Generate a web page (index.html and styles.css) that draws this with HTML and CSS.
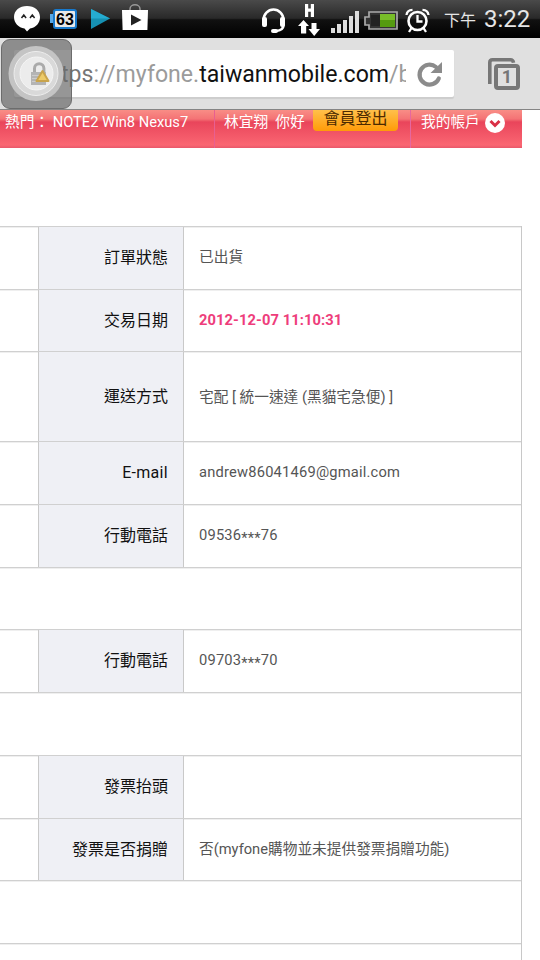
FILE: index.html
```
<!DOCTYPE html>
<html lang="zh-Hant">

<head>
    <meta charset="UTF-8">
    <title>myfone</title>
    <link rel="stylesheet" href="styles.css">
</head>

<body>
    <div id="wrap">
        <div class="status">
            <svg class="chat" width="28" height="28" viewBox="0 0 28 28">
                <path d="M14 1C6.500 1 1 5.500 1 12c0 6 4.500 10.500 10.500 11.500l2.500 3 3-3C23 22.500 27 18 27 12 27 5.500 21.500 1 14 1z" fill="#fff" />
                <path d="M8.500 13l2.300-3 2.300 3M17 13l2.300-3 2.300 3" fill="none" stroke="#222" stroke-width="1.500" />
            </svg>
            <div class="nub"></div>
            <div class="level">63</div>
            <svg class="play" width="19" height="20" viewBox="0 0 19 20">
                <path d="M0 0l19 9.500L0 20z" fill="#1690b2" />
                <path d="M0 0l19 9.500H0z" fill="#25acd1" />
            </svg>
            <svg class="bag" width="26" height="26" viewBox="0 0 26 26">
                <path d="M8 7V5a5 4.200 0 0 1 10 0v2" fill="none" stroke="#999" stroke-width="1.500" />
                <path d="M0 6h26l-.6 20H.6z" fill="#fff" />
                <path d="M9 10.500l10.500 5.500L9 21.500z" fill="#222" />
            </svg>
            <svg class="headset" width="25" height="26" viewBox="0 0 25 26">
                <path d="M2.500 15v-3a10 10.500 0 0 1 20 0v5q0 5-7 6" fill="none" stroke="#fff" stroke-width="2.500" />
                <rect x="1" y="9" width="5" height="10" rx="2" fill="#fff" />
                <rect x="19" y="9" width="5" height="10" rx="2" fill="#fff" />
                <rect x="10" y="21" width="7" height="4" rx="2" fill="#fff" />
            </svg>
            <svg class="data" width="22" height="33" viewBox="0 0 22 33">
                <path d="M7 0h3.200v4.500h2.600V0H16v13h-3.200V7.800h-2.600V13H7zM5.500 16L11 22H8.200v7.500H3V22H0zM13.500 19h5v6H22l-5.800 7L10.500 25h3z" fill="#fff" />
            </svg>
            <svg class="signal" width="29" height="22" viewBox="0 0 29 22">
                <path d="M0 17h4v5H0zM6 13h4v9H6zM12 9h4v13h-4zM18 5h4v17h-4zM24 0h4v22h-4z" fill="#ddd" />
            </svg>
            <svg class="battery" width="35" height="20" viewBox="0 0 35 20">
                <path d="M5 1h28v17H5v-4H1V6h4z" fill="#333" stroke="#aaa" stroke-width="1.700" />
                <path d="M7 4h9v11H7z" fill="#222" />
                <path d="M16 3h15v13H16z" fill="#559b10" />
                <path d="M16 3h15v6H16z" fill="#78bd28" />
            </svg>
            <svg class="alarm" width="25" height="25" viewBox="0 0 25 25">
                <circle cx="12.500" cy="13" r="9" fill="none" stroke="#fff" stroke-width="2.600" />
                <path d="M12.500 7v6.500h5M1.500 7Q2 2 7.500 1.800M23.500 7Q23 2 17.500 1.800M6.500 20L4 24M18.500 20l2.500 4" fill="none" stroke="#fff" stroke-width="2.300" />
            </svg>
            <span class="noon">下午</span>
            <span class="time">3:22</span>
        </div>
        <div class="toolbar">
            <div class="url">
                <div class="address"><span class="scheme">tps</span>://myfone.<b>taiwanmobile.com</b>/b</div>
                <svg width="27" height="27" viewBox="0 0 27 27">
                    <path d="M20 6A10 10 0 1 0 22.800 17.500" fill="none" stroke="#8b8b8b" stroke-width="4.200" stroke-linecap="round" />
                    <path d="M26 1v11H14.500z" fill="#8b8b8b" />
                </svg>
            </div>
            <div class="tabs">
                <svg width="32" height="32" viewBox="0 0 32 32">
                    <path d="M1.800 26V4.500Q1.800 1.800 4.500 1.800h18q2.500 0 3 3" fill="none" stroke="#777" stroke-width="3.600" />
                    <rect x="6" y="6" width="26" height="26" fill="#e0e0e0" />
                    <rect x="8" y="8" width="22" height="22" rx="2" fill="#e0e0e0" stroke="#777" stroke-width="4" />
                </svg>
                <span>1</span>
            </div>
            <!-- 悬浮按钮 -->
            <div class="touch">
                <svg width="70" height="70" viewBox="0 0 70 70">
                    <circle cx="35" cy="34.500" r="27.500" fill="#c4c4c4" />
                    <circle cx="35" cy="34.500" r="22" fill="#d9d9d9" stroke="#eee" />
                    <circle cx="35.500" cy="34.500" r="16.500" fill="#ececec" stroke="#f5f5f5" />
                    <path d="M33.500 34v-4.500a4.700 4.800 0 0 1 9.400 0V34" fill="none" stroke="#aaa" stroke-width="3" />
                    <rect x="30" y="33" width="15" height="13" fill="#b4b4b4" />
                    <path d="M31 36.500h13M31 39.500h13M31 42.500h13" stroke="#ccc" />
                    <path d="M41.500 32L47.500 42h-12z" fill="#edcb68" stroke="#c9a44c" stroke-width="2" stroke-linejoin="round" />
                </svg>
            </div>
        </div>
        <div class="nav">
            <div class="hot">熱門： NOTE2 Win8 Nexus7</div>
            <div class="hello">林宜翔&nbsp; 你好</div>
            <a class="logout">會員登出</a>
            <div class="account">我的帳戶
                <svg width="20" height="20" viewBox="0 0 20 20">
                    <circle cx="10" cy="10" r="10" fill="#fff" />
                    <path d="M5.500 8l4.500 4.500L14.500 8" fill="none" stroke="#d93046" stroke-width="3" />
                </svg>
            </div>
        </div>
        <ul class="order">
            <li><i></i><label>訂單狀態</label><p>已出貨</p></li>
            <li class="short"><i></i><label>交易日期</label><p class="date">2012-12-07 11:10:31</p></li>
            <li class="tall"><i></i><label>運送方式</label><p>宅配 [ 統一速達 (黑貓宅急便) ]</p></li>
            <li><i></i><label class="latin">E-mail</label><p class="mail">andrew86041469@gmail.com</p></li>
            <li><i></i><label>行動電話</label><p class="phone">09536<span>***</span>76</p></li>
            <li class="short"></li>
            <li><i></i><label>行動電話</label><p class="phone">09703<span>***</span>70</p></li>
            <li></li>
            <li><i></i><label>發票抬頭</label><p></p></li>
            <li class="short"><i></i><label>發票是否捐贈</label><p>否(myfone購物並未提供發票捐贈功能)</p></li>
            <li></li>
            <li></li>
        </ul>
    </div>
</body>

</html>
```
FILE: styles.css
```
body {
    margin: 0;
    background: #fff;
    font-family: Roboto, "Noto Sans CJK TC", sans-serif;
}

ul,
p {
    padding: 0;
    margin: 0;
    list-style: none;
}

svg {
    display: block;
    flex: none;
}

#wrap {
    width: 540px;
    height: 960px;
    overflow: hidden;
}

.status {
    display: flex;
    align-items: flex-start;
    box-sizing: border-box;
    height: 38px;
    padding-left: 13px;
    background: linear-gradient(#4a4a4a, #292929 48%, #111 52%, #000);
    color: #e6e6e6;
    white-space: nowrap;
}

.chat {
    margin-top: 5px;
}

.nub {
    width: 3px;
    height: 9px;
    margin: 14px 0 0 9px;
    background: #5aa9e6;
}

.level {
    box-sizing: border-box;
    width: 24px;
    height: 20px;
    margin-top: 9px;
    border: 2px solid #1779cd;
    border-radius: 3px;
    background: #e8e8e8;
    color: #000;
    font: bold 16px/17px "Liberation Sans", sans-serif;
    text-align: center;
}

.play {
    margin: 9px 0 0 14px;
}

.bag {
    margin: 4px 0 0 12px;
}

.headset {
    margin: 8px 0 0 113px;
}

.data {
    margin: 4px 0 0 12px;
}

.signal {
    margin: 11px 0 0 11px;
}

.battery {
    margin: 11px 0 0 4px;
}

.alarm {
    margin: 8px 0 0 6px;
}

.noon {
    width: 40px;
    margin-left: 14px;
    font-size: 16px;
    line-height: 42px;
}

.time {
    font-size: 24px;
    line-height: 38px;
}

.toolbar {
    position: relative;
    display: flex;
    box-sizing: border-box;
    height: 72px;
    padding: 12px 0 0 14px;
    border-bottom: 1px solid #858585;
    background: #e0e0e0;
}

.url {
    display: flex;
    box-sizing: border-box;
    width: 440px;
    height: 47px;
    padding: 11px 11px 0 47px;
    border-radius: 2px;
    background: #fff;
    box-shadow: 0 2px 1px #cdcdcd;
}

.address {
    width: 345px;
    height: 36px;
    margin: -4px 10px 0 0;
    overflow: hidden;
    color: #9b9b9b;
    font-size: 23.1px;
    line-height: 36px;
    white-space: nowrap;
}

.address b {
    color: #111;
    font-weight: normal;
}

.scheme {
    color: #777;
}

.tabs {
    position: relative;
    margin: 8px 0 0 34px;
}

.tabs span {
    position: absolute;
    top: 7px;
    left: 7px;
    width: 24px;
    color: #777;
    font: bold 18px/24px Roboto, sans-serif;
    text-align: center;
}

.touch {
    position: absolute;
    top: 1px;
    left: 1px;
    box-sizing: border-box;
    width: 71px;
    height: 70px;
    overflow: hidden;
    border: 1px solid #6c6c6c;
    border-radius: 9px;
    background: rgba(105, 105, 105, .7);
}

.touch svg {
    margin: -1px;
}

.nav {
    display: flex;
    width: 522px;
    height: 38px;
    background: linear-gradient(#f98d86, #f47375 9px, #e9455b 12px, #fa6672 35px, #e8586a);
    color: #fff;
    font-size: 14.7px;
    line-height: 24px;
    white-space: nowrap;
}

.hot {
    box-sizing: border-box;
    width: 215px;
    padding-left: 5px;
    border-right: 1px solid #e85f91;
}

.hello {
    width: 89px;
    padding-left: 9px;
}

.logout {
    width: 85px;
    height: 21px;
    border-radius: 0 0 4px 4px;
    background: linear-gradient(#ffc04b, #ff9b08);
    color: #4c2a00;
    font-size: 16px;
    line-height: 17px;
    text-align: center;
}

.account {
    display: flex;
    gap: 5px;
    margin-left: 12px;
    padding-left: 10px;
    border-left: 1px solid #e667a0;
}

.account svg {
    margin-top: 3px;
}

.order {
    width: 521px;
    margin-top: 78px;
    border-right: 1px solid #c8c8c8;
    color: #555;
    font-size: 14.7px;
}

.order li {
    display: flex;
    box-sizing: border-box;
    height: 63px;
    border-top: 1px solid #d0d0d0;
    box-shadow: inset 0 1px #efefef;
    line-height: 61px;
    white-space: nowrap;
}

.order .short {
    height: 62px;
}

.order .tall {
    height: 90px;
    line-height: 90px;
}

.order i {
    width: 38px;
}

.order label {
    box-sizing: border-box;
    width: 146px;
    padding-right: 15px;
    border: solid #c9c9c9;
    border-width: 0 1px;
    background: #eff0f5;
    color: #111;
    font-size: 16px;
    line-height: 62px;
    text-align: right;
}

.order .tall label {
    line-height: 90px;
}

.order .latin {
    letter-spacing: .3px;
}

.order p {
    padding-left: 15px;
}

.order .date {
    color: #ee3d7b;
    font-weight: bold;
    line-height: 60px;
    letter-spacing: .1px;
}

.order .mail,
.order .phone {
    letter-spacing: .2px;
}

.phone span {
    display: inline-block;
    line-height: 20px;
    vertical-align: -3px;
}
```
